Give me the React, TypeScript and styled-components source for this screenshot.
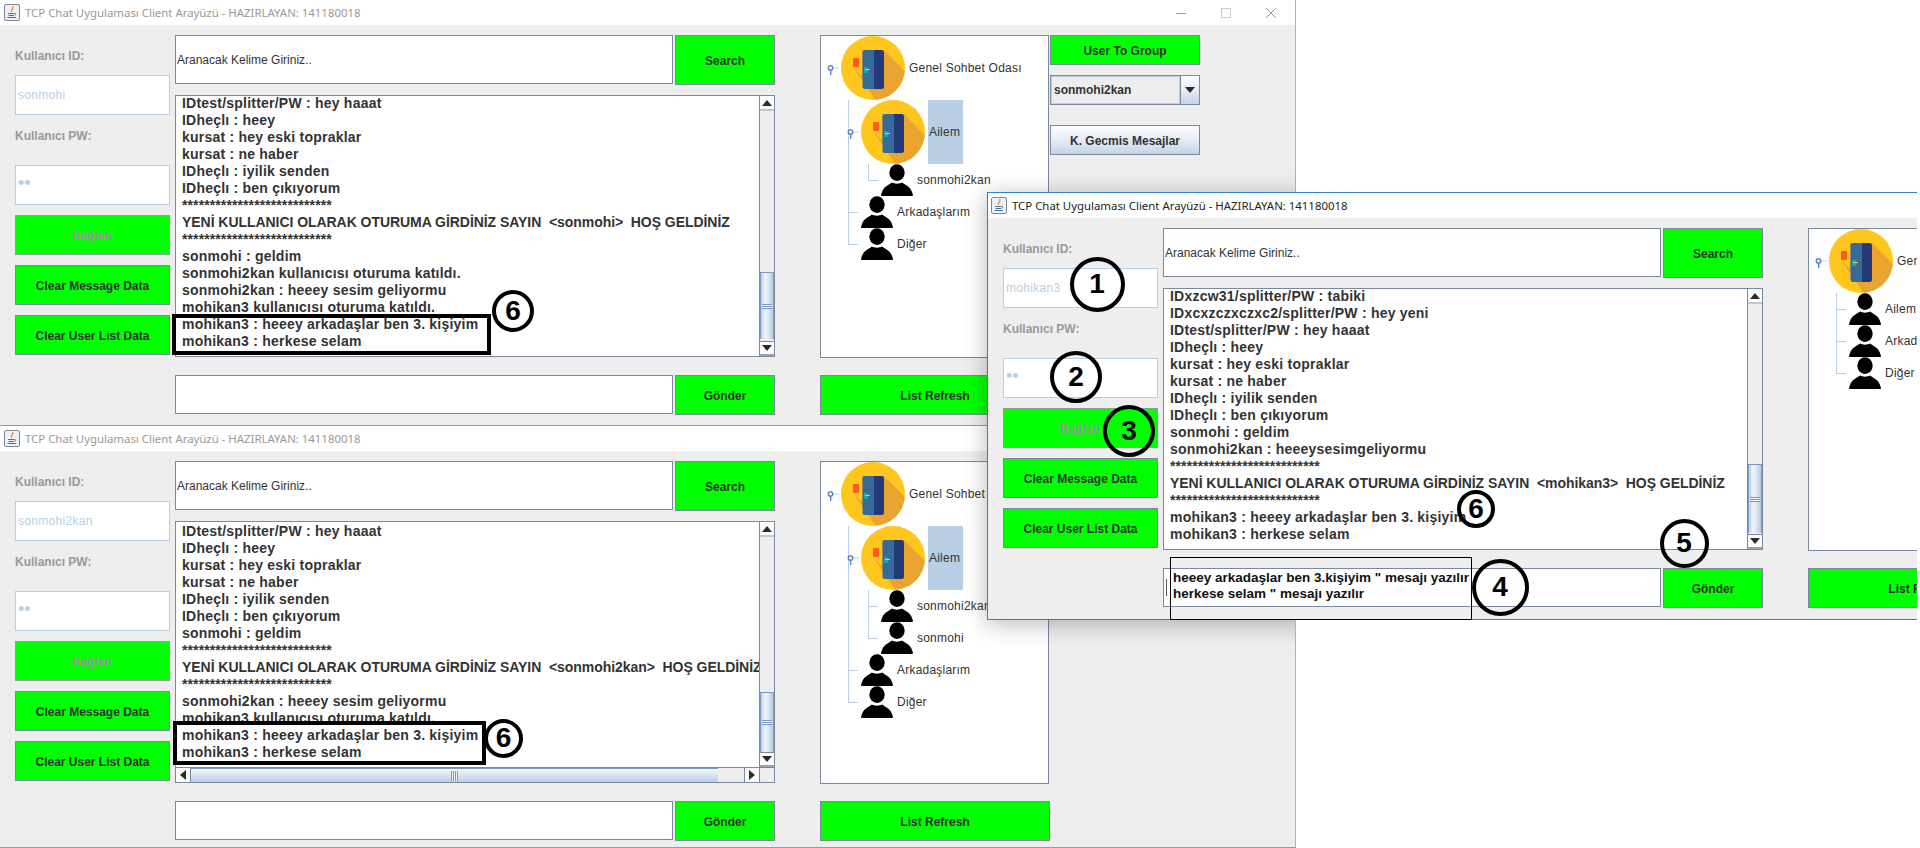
import React from "react";
import styled, { createGlobalStyle, css } from "styled-components";

const Global = createGlobalStyle`
  html, body { margin: 0; padding: 0; background: #fff; overflow: hidden; }
  * { box-sizing: border-box; }
`;

const FONT = `"Liberation Sans", Arial, sans-serif`;
const EDGE = "#7a8a9c";
const PALE = "#b8cfe5";

const Stage = styled.div`
  position: relative;
  width: 1920px;
  height: 848px;
  overflow: hidden;
  background: #fff;
  font-family: ${FONT};
`;

const Win = styled.section<{ $x: number; $y: number; $w: number; $h: number; $active?: boolean }>`
  position: absolute;
  left: ${(p) => p.$x}px;
  top: ${(p) => p.$y}px;
  width: ${(p) => p.$w}px;
  height: ${(p) => p.$h}px;
  background: #eeeeee;
  overflow: hidden;
  display: flex;
  flex-direction: column;
  ${(p) =>
    p.$active
      ? css`
          border: 1px solid #2f7fd0;
          border-right: none;
        `
      : css`
          border-bottom: 1px solid #9a9a9a;
          border-right: 1px solid #b0b0b0;
        `}
`;

const ShadowClip = styled.div`
  position: absolute;
  left: 0;
  top: 0;
  width: 1295px;
  height: 848px;
  overflow: hidden;
  pointer-events: none;
`;

const ShadowCaster = styled.div`
  position: absolute;
  left: 987px;
  top: 192px;
  width: 930px;
  height: 428px;
  box-shadow: 0 4px 22px rgba(0, 0, 0, 0.28);
`;

const TitleBar = styled.header<{ $active?: boolean }>`
  flex: 0 0 25px;
  height: 25px;
  background: #fff;
  display: flex;
  align-items: center;
  padding-left: ${(p) => (p.$active ? 3 : 4)}px;
  color: ${(p) => (p.$active ? "#222" : "#999")};
`;

const TitleText = styled.span`
  margin: -1px 0 0 5px;
  font: 11.4px "Noto Sans", "Open Sans", sans-serif;
  white-space: nowrap;
  flex: 1;
`;

const WinControls = styled.div`
  display: flex;
  align-items: center;
  gap: 35px;
  margin-right: 19px;
`;

const Body = styled.div`
  flex: 1;
  display: flex;
  align-items: flex-start;
  padding: 10px 0 0 15px;
`;

const LeftCol = styled.div`
  flex: 0 0 155px;
  margin-right: 5px;
  display: flex;
  flex-direction: column;
`;

const FieldLabel = styled.label<{ $h: number }>`
  height: ${(p) => p.$h}px;
  padding-top: 14px;
  font: bold 12px/14px ${FONT};
  color: #999;
`;

const PaleField = styled.div`
  height: 40px;
  background: #fff;
  border: 1px solid ${PALE};
  display: flex;
  align-items: center;
  padding-left: 2px;
  font: 12px ${FONT};
  letter-spacing: 0.3px;
  color: ${PALE};
`;

const Dots = styled.span`
  font: 18px ${FONT};
  letter-spacing: 0;
  margin-top: -3px;
  color: #b8cfe5;
`;

const GreenButton = styled.button<{ $h?: number; $w?: number; $top?: number; $off?: boolean }>`
  display: block;
  flex: 0 0 auto;
  width: ${(p) => (p.$w ? `${p.$w}px` : "100%")};
  height: ${(p) => p.$h ?? 40}px;
  margin: ${(p) => p.$top ?? 0}px 0 0;
  padding: 2px 0 0;
  background: #00ff00;
  border: 1px solid ${(p) => (p.$off ? "#999" : EDGE)};
  border-radius: 0;
  font: bold 12px ${FONT};
  color: ${(p) => (p.$off ? "#999" : "#333")};
`;

const CenterCol = styled.div`
  flex: 0 0 600px;
  width: 600px;
  margin-right: 45px;
  display: flex;
  flex-direction: column;
`;

const InputRow = styled.div<{ $h: number; $top?: number }>`
  display: flex;
  gap: 2px;
  height: ${(p) => p.$h}px;
  margin-top: ${(p) => p.$top ?? 0}px;
`;

const TextBox = styled.div<{ $h: number }>`
  flex: 1;
  height: ${(p) => p.$h}px;
  background: #fff;
  border: 1px solid ${EDGE};
  display: flex;
  align-items: center;
  padding-left: 1px;
  font: 12px ${FONT};
  color: #333;
`;

const Caret = styled.i`
  display: block;
  width: 1px;
  height: 17px;
  margin-left: 1px;
  background: #555;
`;

const ScrollPane = styled.div<{ $withH?: boolean }>`
  height: 262px;
  margin-top: 10px;
  background: #fff;
  border: 1px solid ${EDGE};
  display: grid;
  grid-template-columns: 1fr 15px;
  grid-template-rows: ${(p) => (p.$withH ? "1fr 15px" : "1fr")};
  overflow: hidden;
`;

const Viewport = styled.div`
  min-width: 0;
  overflow: hidden;
  padding-left: 6px;
  font: bold 14px/17px ${FONT};
  color: #333;
  white-space: pre;
`;

const MessageList = styled.div<{ $top: number }>`
  margin-top: ${(p) => p.$top}px;
`;

const Line = styled.div<{ $spacing: number }>`
  height: 17px;
  letter-spacing: ${(p) => p.$spacing}px;
`;

const VBar = styled.div`
  display: flex;
  flex-direction: column;
  background: #eeeeee;
  border-left: 1px solid ${EDGE};
`;

const HBar = styled.div`
  display: flex;
  background: #eeeeee;
  border-top: 1px solid ${EDGE};
`;

const Corner = styled.div`
  background: #eeeeee;
  border-left: 1px solid ${EDGE};
  border-top: 1px solid ${EDGE};
`;

const ArrowCell = styled.div<{ $dir: "up" | "down" | "left" | "right" }>`
  flex: 0 0 15px;
  display: flex;
  align-items: center;
  justify-content: center;
  background: #fbfbfb;
  ${(p) => p.$dir === "up" && `border-bottom: 2px solid #c3c7cc;`}
  ${(p) => p.$dir === "down" && `border-top: 1px solid ${EDGE}; border-bottom: 2px solid #9aa2ab;`}
  ${(p) => p.$dir === "left" && `border-right: 1px solid ${EDGE};`}
  ${(p) => p.$dir === "right" && `border-left: 1px solid ${EDGE}; margin-left: 0;`}
`;

const Track = styled.div<{ $horizontal?: boolean }>`
  flex: 1;
  min-width: 0;
  min-height: 0;
  display: flex;
  flex-direction: ${(p) => (p.$horizontal ? "row" : "column")};
`;

const VThumb = styled.div<{ $top: number; $h: number }>`
  margin-top: ${(p) => p.$top}px;
  height: ${(p) => p.$h}px;
  background: linear-gradient(90deg, #bcd0e6 0%, #f2f7fb 35%, #cfdeee 75%, #b4cae2 100%);
  border-top: 1px solid #7b98c8;
  border-left: 1px solid #7b98c8;
  border-right: 1px solid #7b98c8;
  display: flex;
  align-items: center;
  justify-content: center;
`;

const HThumb = styled.div<{ $w: number }>`
  flex: 0 0 ${(p) => p.$w}px;
  background: linear-gradient(180deg, #f2f7fb 0%, #d8e5f2 45%, #b8cfe5 100%);
  border-top: 1px solid #7b98c8;
  display: flex;
  align-items: center;
  justify-content: center;
`;

const Grip = styled.i<{ $vertical?: boolean }>`
  display: block;
  width: ${(p) => (p.$vertical ? 7 : 10)}px;
  height: ${(p) => (p.$vertical ? 10 : 5)}px;
  ${(p) =>
    p.$vertical
      ? `background: repeating-linear-gradient(90deg, #7b98c8 0 1px, #eef4fa 1px 2px);`
      : `background: repeating-linear-gradient(180deg, #7b98c8 0 1px, #eef4fa 1px 2px);`}
`;

const TreeCol = styled.div`
  flex: 0 0 230px;
  display: flex;
  flex-direction: column;
`;

const TreePane = styled.div`
  height: 323px;
  width: 229px;
  background: #fff;
  border: 1px solid ${EDGE};
  overflow: hidden;
`;

const TreeRow = styled.div<{ $h: number; $indent: number }>`
  position: relative;
  height: ${(p) => p.$h}px;
  padding-left: ${(p) => p.$indent}px;
  display: flex;
  align-items: center;
  font: 12px ${FONT};
  letter-spacing: 0.22px;
  color: #333;
  white-space: nowrap;
`;

const NodeLabel = styled.span<{ $selected?: boolean; $h: number }>`
  height: ${(p) => p.$h}px;
  line-height: ${(p) => p.$h}px;
  margin-left: ${(p) => (p.$selected ? 3 : 4)}px;
  padding: 0 ${(p) => (p.$selected ? 3 : 0)}px 0 ${(p) => (p.$selected ? 1 : 0)}px;
  background: ${(p) => (p.$selected ? PALE : "transparent")};
`;

const Guide = styled.i<{ $l: number; $t: number; $w: number; $h: number }>`
  position: absolute;
  left: ${(p) => p.$l}px;
  top: ${(p) => p.$t}px;
  width: ${(p) => p.$w}px;
  height: ${(p) => p.$h}px;
  background: ${PALE};
`;

const Handle = styled.svg<{ $l: number }>`
  position: absolute;
  left: ${(p) => p.$l}px;
  top: 50%;
  margin-top: -3px;
`;

const ExtraCol = styled.div`
  flex: 0 0 150px;
  display: flex;
  flex-direction: column;
`;

const Combo = styled.div`
  height: 30px;
  margin-top: 10px;
  display: flex;
  border: 1px solid ${EDGE};
  background: #eeeeee;
`;

const ComboValue = styled.div`
  flex: 1;
  border: 1px solid #c2cdd8;
  display: flex;
  align-items: center;
  padding-left: 2px;
  font: bold 12px ${FONT};
  color: #333;
`;

const ComboArrow = styled.div`
  flex: 0 0 19px;
  border-left: 1px solid ${EDGE};
  background: linear-gradient(180deg, #fbfcfe 0%, #e6edf5 50%, #c3d5e8 100%);
  display: flex;
  align-items: center;
  justify-content: center;
`;

const BlueButton = styled.button`
  height: 30px;
  margin: 20px 0 0;
  padding: 1px 0 0;
  border: 1px solid ${EDGE};
  border-radius: 0;
  background: linear-gradient(180deg, #fbfcfe 0%, #e6edf5 50%, #c3d5e8 100%);
  font: bold 12px ${FONT};
  color: #333;
`;

const Ring = styled.div<{ $cx: number; $cy: number; $d: number; $b?: number }>`
  position: absolute;
  left: ${(p) => p.$cx - p.$d / 2}px;
  top: ${(p) => p.$cy - p.$d / 2}px;
  width: ${(p) => p.$d}px;
  height: ${(p) => p.$d}px;
  border: ${(p) => p.$b ?? 4}px solid #000;
  border-radius: 50%;
  display: flex;
  align-items: center;
  justify-content: center;
  font: bold 28px ${FONT};
  color: #000;
`;

const MarkBox = styled.div<{ $x: number; $y: number; $w: number; $h: number }>`
  position: absolute;
  left: ${(p) => p.$x}px;
  top: ${(p) => p.$y}px;
  width: ${(p) => p.$w}px;
  height: ${(p) => p.$h}px;
  border: 4px solid #000;
`;

const NoteBox = styled.div`
  position: absolute;
  left: 1170px;
  top: 557px;
  width: 302px;
  height: 63px;
  border: 1px solid #000;
  padding: 12px 0 0 2px;
  font: bold 13.5px/16px ${FONT};
  color: #111;
  white-space: pre;
`;

const JavaIcon = () => (
  <svg width="16" height="17" viewBox="0 0 16 17">
    <rect x="0.5" y="0.5" width="15" height="16" rx="1.5" fill="#eef2f6" stroke="#7b8794" />
    <path d="M8.5 2 C10 4.5 6 5.5 7.5 8 C6.5 6 10.5 5 8.5 2 Z" fill="#e8731a" stroke="#e8731a" strokeWidth="0.6" />
    <path d="M4 9.5 H10.5 M4.5 11.5 H10 M3.5 13.5 H12" stroke="#4a6f9c" strokeWidth="1" fill="none" />
    <path d="M10.5 9.5 Q13 9.5 11 11.5" stroke="#4a6f9c" strokeWidth="0.8" fill="none" />
  </svg>
);

const Tri = ({ dir }: { dir: "up" | "down" | "left" | "right" }) => {
  const pts = { up: "0,6 10,6 5,0", down: "0,0 10,0 5,6", left: "6,0 6,10 0,5", right: "0,0 0,10 6,5" }[dir];
  const vert = dir === "up" || dir === "down";
  return (
    <svg width={vert ? 10 : 6} height={vert ? 6 : 10} viewBox={vert ? "0 0 10 6" : "0 0 6 10"}>
      <polygon points={pts} fill="#2b2b2b" />
    </svg>
  );
};

const DoorIcon = ({ id }: { id: string }) => (
  <svg width="64" height="64" viewBox="0 0 64 64">
    <defs>
      <clipPath id={id}>
        <circle cx="32" cy="32" r="32" />
      </clipPath>
    </defs>
    <circle cx="32" cy="32" r="32" fill="#ffc61e" />
    <polygon points="43,14 72,43 72,72 40,72 12,31 21,40 21,14" fill="#e9a52f" clipPath={`url(#${id})`} />
    <rect x="12" y="22" width="6" height="9" rx="1" fill="#ff5a1f" />
    <path d="M24 14 H32.5 V53 H24 Q21.5 53 21.5 50.5 V16.5 Q21.5 14 24 14 Z" fill="#366a99" />
    <path d="M32.5 14 H40.5 Q43 14 43 16.5 V50.5 Q43 53 40.5 53 H32.5 Z" fill="#243a78" />
    <rect x="23" y="31" width="4" height="6" fill="#12a9b4" />
    <rect x="24" y="33" width="5" height="1" fill="#ffc61e" />
  </svg>
);

const PersonIcon = () => (
  <svg width="32" height="32" viewBox="0 0 32 32">
    <ellipse cx="16" cy="8.6" rx="7.7" ry="8.4" fill="#000" />
    <path d="M1 32 Q-0.5 31.5 0.3 30 C1.5 26 3 23.5 6 21.8 L11 18.6 C13 20 19 20 21 18.6 L26 21.8 C29 23.5 30.5 26 31.7 30 Q32.5 31.5 31 32 Z" fill="#000" />
  </svg>
);

const KeyHandle = ({ left }: { left: number }) => (
  <Handle $l={left} width="16" height="10" viewBox="0 0 16 10">
    <path d="M6 3 H12" stroke={PALE} strokeWidth="1" />
    <circle cx="3.5" cy="3" r="2.2" fill="#fff" stroke="#6583bd" strokeWidth="1.5" />
    <rect x="3" y="5" width="1.4" height="5" fill="#6583bd" />
  </Handle>
);

type Node = {
  label: string;
  kind: "root" | "group" | "person";
  depth: number;
  selected?: boolean;
  guides?: [number, number, number, number][];
};

const Tree = ({ nodes, id }: { nodes: Node[]; id: string }) => (
  <TreePane>
    {nodes.map((n, i) => {
      const big = n.kind !== "person";
      const h = big ? 64 : 32;
      const indent = n.kind === "root" ? 20 : n.kind === "group" ? 40 : n.depth === 2 ? 60 : 40;
      return (
        <TreeRow key={i} $h={h} $indent={indent}>
          {(n.guides ?? []).map((g, k) => (
            <Guide key={k} $l={g[0]} $t={g[1]} $w={g[2]} $h={g[3]} />
          ))}
          {n.kind === "root" && <KeyHandle left={6} />}
          {n.kind === "group" && <KeyHandle left={26} />}
          {big ? <DoorIcon id={`${id}-${i}`} /> : <PersonIcon />}
          <NodeLabel $h={h} $selected={n.selected}>
            {n.label}
          </NodeLabel>
        </TreeRow>
      );
    })}
  </TreePane>
);

const Stars = "***************************";
const wrapA = [
  "IDtest/splitter/PW : hey haaat",
  "IDheçlı : heey",
  "kursat : hey eski topraklar",
  "kursat : ne haber",
  "IDheçlı : iyilik senden",
  "IDheçlı : ben çıkıyorum",
  Stars,
  "YENİ KULLANICI OLARAK OTURUMA GİRDİNİZ SAYIN  <sonmohi>  HOŞ GELDİNİZ",
  Stars,
  "sonmohi : geldim",
  "sonmohi2kan kullanıcısı oturuma katıldı.",
  "sonmohi2kan : heeey sesim geliyormu",
  "mohikan3 kullanıcısı oturuma katıldı.",
  "mohikan3 : heeey arkadaşlar ben 3. kişiyim",
  "mohikan3 : herkese selam",
];
const wrapB = [
  "IDtest/splitter/PW : hey haaat",
  "IDheçlı : heey",
  "kursat : hey eski topraklar",
  "kursat : ne haber",
  "IDheçlı : iyilik senden",
  "IDheçlı : ben çıkıyorum",
  "sonmohi : geldim",
  Stars,
  "YENİ KULLANICI OLARAK OTURUMA GİRDİNİZ SAYIN  <sonmohi2kan>  HOŞ GELDİNİZ",
  Stars,
  "sonmohi2kan : heeey sesim geliyormu",
  "mohikan3 kullanıcısı oturuma katıldı.",
  "mohikan3 : heeey arkadaşlar ben 3. kişiyim",
  "mohikan3 : herkese selam",
];
const wrapC = [
  "IDxzcw31/splitter/PW : tabiki",
  "IDxcxzczxczxc2/splitter/PW : hey yeni",
  "IDtest/splitter/PW : hey haaat",
  "IDheçlı : heey",
  "kursat : hey eski topraklar",
  "kursat : ne haber",
  "IDheçlı : iyilik senden",
  "IDheçlı : ben çıkıyorum",
  "sonmohi : geldim",
  "sonmohi2kan : heeeysesimgeliyormu",
  Stars,
  "YENİ KULLANICI OLARAK OTURUMA GİRDİNİZ SAYIN  <mohikan3>  HOŞ GELDİNİZ",
  Stars,
  "mohikan3 : heeey arkadaşlar ben 3. kişiyim",
  "mohikan3 : herkese selam",
];

const spacingOf = (l: string) => {
  if (l === Stars) return 0.1;
  if (l.startsWith("YENİ")) return -0.05;
  return 0.22;
};

const VGuide: [number, number, number, number] = [27, 0, 1, 64];

const treeA: Node[] = [
  { label: "Genel Sohbet Odası", kind: "root", depth: 0 },
  { label: "Ailem", kind: "group", depth: 1, selected: true, guides: [VGuide] },
  { label: "sonmohi2kan", kind: "person", depth: 2, guides: [[27, 0, 1, 32], [47, 0, 1, 16], [47, 16, 10, 1]] },
  { label: "Arkadaşlarım", kind: "person", depth: 1, guides: [[27, 0, 1, 32], [27, 16, 10, 1]] },
  { label: "Diğer", kind: "person", depth: 1, guides: [[27, 0, 1, 17], [27, 16, 10, 1]] },
];
const treeB: Node[] = [
  { label: "Genel Sohbet Odası", kind: "root", depth: 0 },
  { label: "Ailem", kind: "group", depth: 1, selected: true, guides: [VGuide] },
  { label: "sonmohi2kan", kind: "person", depth: 2, guides: [[27, 0, 1, 32], [47, 0, 1, 32], [47, 16, 10, 1]] },
  { label: "sonmohi", kind: "person", depth: 2, guides: [[27, 0, 1, 32], [47, 0, 1, 17], [47, 16, 10, 1]] },
  { label: "Arkadaşlarım", kind: "person", depth: 1, guides: [[27, 0, 1, 32], [27, 16, 10, 1]] },
  { label: "Diğer", kind: "person", depth: 1, guides: [[27, 0, 1, 17], [27, 16, 10, 1]] },
];
const treeC: Node[] = [
  { label: "Genel Sohbet Odası", kind: "root", depth: 0 },
  { label: "Ailem", kind: "person", depth: 1, guides: [[27, 0, 1, 32], [27, 16, 10, 1]] },
  { label: "Arkadaşlarım", kind: "person", depth: 1, guides: [[27, 0, 1, 32], [27, 16, 10, 1]] },
  { label: "Diğer", kind: "person", depth: 1, guides: [[27, 0, 1, 17], [27, 16, 10, 1]] },
];

type WinProps = {
  x: number;
  y: number;
  w: number;
  h: number;
  active?: boolean;
  controls?: boolean;
  user: string;
  lines: string[];
  textTop: number;
  thumbTop: number;
  thumbH: number;
  hbar?: boolean;
  tree: Node[];
  treeId: string;
  extra?: boolean;
  composer?: React.ReactNode;
};

const ChatWindow = (p: WinProps) => (
  <Win $x={p.x} $y={p.y} $w={p.w} $h={p.h} $active={p.active}>
    <TitleBar $active={p.active}>
      <JavaIcon />
      <TitleText>TCP Chat Uygulaması Client Arayüzü - HAZIRLAYAN: 141180018</TitleText>
      {p.controls && (
        <WinControls>
          <svg width="10" height="12" viewBox="0 0 10 12">
            <path d="M0 6.5 H10" stroke="#999" />
          </svg>
          <svg width="10" height="10" viewBox="0 0 10 10">
            <rect x="0.5" y="0.5" width="9" height="9" fill="none" stroke="#ccc" />
          </svg>
          <svg width="10" height="10" viewBox="0 0 10 10">
            <path d="M0 0 L10 10 M10 0 L0 10" stroke="#999" />
          </svg>
        </WinControls>
      )}
    </TitleBar>
    <Body>
      <LeftCol>
        <FieldLabel $h={40}>Kullanıcı ID:</FieldLabel>
        <PaleField>{p.user}</PaleField>
        <FieldLabel $h={50}>Kullanıcı PW:</FieldLabel>
        <PaleField>
          <Dots>••</Dots>
        </PaleField>
        <GreenButton $top={10} $off>
          Bağlan
        </GreenButton>
        <GreenButton $top={10}>Clear Message Data</GreenButton>
        <GreenButton $top={10}>Clear User List Data</GreenButton>
      </LeftCol>
      <CenterCol>
        <InputRow $h={50}>
          <TextBox $h={49}>Aranacak Kelime Giriniz..</TextBox>
          <GreenButton $w={100} $h={50}>
            Search
          </GreenButton>
        </InputRow>
        <ScrollPane $withH={p.hbar}>
          <Viewport>
            <MessageList $top={p.textTop}>
              {p.lines.map((l, i) => (
                <Line key={i} $spacing={spacingOf(l)}>
                  {l}
                </Line>
              ))}
            </MessageList>
          </Viewport>
          <VBar>
            <ArrowCell $dir="up">
              <Tri dir="up" />
            </ArrowCell>
            <Track>
              <VThumb $top={p.thumbTop} $h={p.thumbH}>
                <Grip />
              </VThumb>
            </Track>
            <ArrowCell $dir="down">
              <Tri dir="down" />
            </ArrowCell>
          </VBar>
          {p.hbar && (
            <HBar>
              <ArrowCell $dir="left">
                <Tri dir="left" />
              </ArrowCell>
              <Track $horizontal>
                <HThumb $w={527}>
                  <Grip $vertical />
                </HThumb>
              </Track>
              <ArrowCell $dir="right">
                <Tri dir="right" />
              </ArrowCell>
            </HBar>
          )}
          {p.hbar && <Corner />}
        </ScrollPane>
        <InputRow $h={40} $top={18}>
          <TextBox $h={39}>{p.composer}</TextBox>
          <GreenButton $w={100}>Gönder</GreenButton>
        </InputRow>
      </CenterCol>
      <TreeCol>
        <Tree nodes={p.tree} id={p.treeId} />
        <GreenButton $top={17}>List Refresh</GreenButton>
      </TreeCol>
      {p.extra && (
        <ExtraCol>
          <GreenButton $h={30}>User To Group</GreenButton>
          <Combo>
            <ComboValue>sonmohi2kan</ComboValue>
            <ComboArrow>
              <Tri dir="down" />
            </ComboArrow>
          </Combo>
          <BlueButton>K. Gecmis Mesajlar</BlueButton>
        </ExtraCol>
      )}
    </Body>
  </Win>
);

export default function App() {
  return (
    <Stage>
      <Global />
      <ChatWindow
        x={0}
        y={0}
        w={1296}
        h={426}
        controls
        user="sonmohi"
        lines={wrapA}
        textTop={-1}
        thumbTop={161}
        thumbH={67}
        tree={treeA}
        treeId="a"
        extra
      />
      <ChatWindow
        x={0}
        y={426}
        w={1296}
        h={422}
        user="sonmohi2kan"
        lines={wrapB}
        textTop={1}
        thumbTop={155}
        thumbH={60}
        hbar
        tree={treeB}
        treeId="b"
      />
      <ShadowClip>
        <ShadowCaster />
      </ShadowClip>
      <ChatWindow
        x={987}
        y={192}
        w={930}
        h={428}
        active
        user="mohikan3"
        lines={wrapC}
        textTop={-1}
        thumbTop={160}
        thumbH={69}
        tree={treeC}
        treeId="c"
        composer={<Caret />}
      />
      <MarkBox $x={172} $y={314} $w={319} $h={41} />
      <MarkBox $x={173} $y={721} $w={313} $h={44} />
      <NoteBox>{`heeey arkadaşlar ben 3.kişiyim " mesajı yazılır\nherkese selam " mesajı yazılır`}</NoteBox>
      <Ring $cx={513} $cy={311} $d={42}>6</Ring>
      <Ring $cx={503.5} $cy={738} $d={39}>6</Ring>
      <Ring $cx={1476} $cy={509} $d={38}>6</Ring>
      <Ring $cx={1097} $cy={284} $d={55}>1</Ring>
      <Ring $cx={1076} $cy={377} $d={52}>2</Ring>
      <Ring $cx={1129} $cy={431} $d={52}>3</Ring>
      <Ring $cx={1500} $cy={587} $d={57}>4</Ring>
      <Ring $cx={1684} $cy={543} $d={49}>5</Ring>
    </Stage>
  );
}
